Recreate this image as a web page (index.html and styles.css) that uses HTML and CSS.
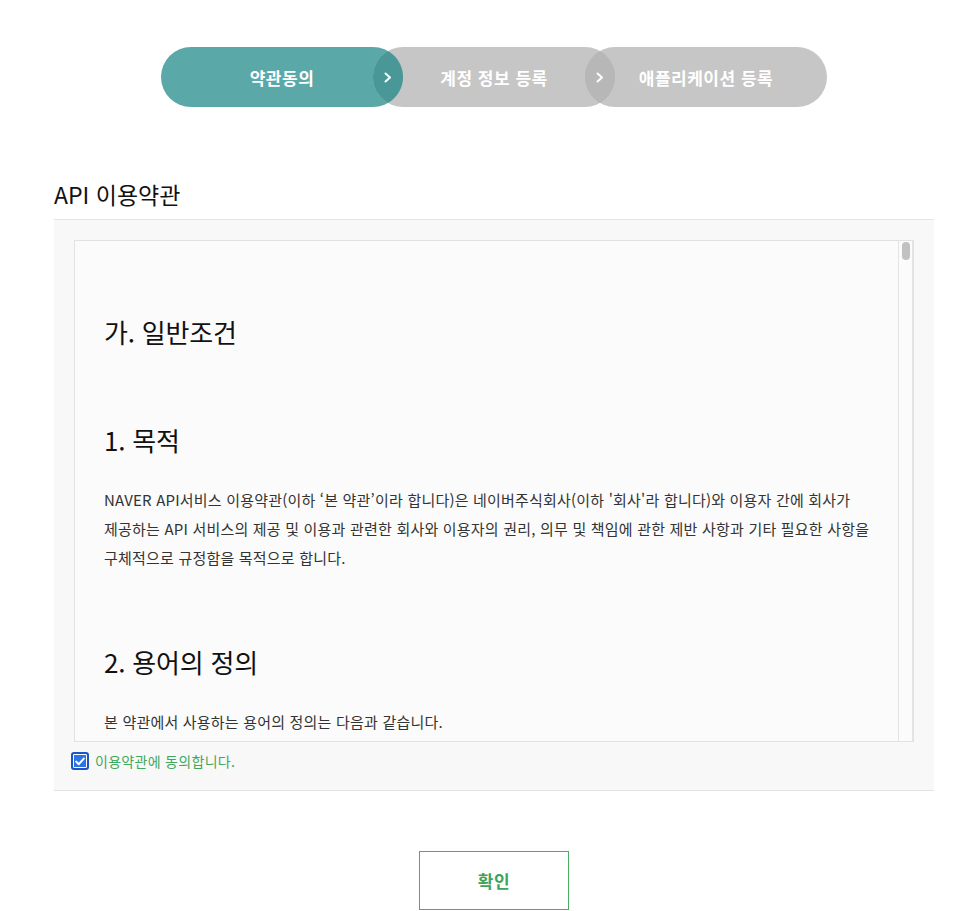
FILE: index.html
```html
<!DOCTYPE html>
<html lang="ko">
<head>
<meta charset="utf-8">
<title>API 이용약관</title>
<link rel="stylesheet" href="styles.css">
</head>
<body>
<div class="page">
  <ol class="steps">
    <li class="step step-active">약관동의</li>
    <li class="step">
      <span class="joint">
        <svg class="lens" width="30" height="60" viewBox="0 0 30 60"><path class="lens-teal" d="M15 4 A30 30 0 0 1 15 56 A30 30 0 0 1 15 4 Z"/></svg>
        <svg class="chev" width="8" height="11" viewBox="0 0 8 11"><polyline points="1.5,1.5 6,5.5 1.5,9.5"/></svg>
      </span>
      계정 정보 등록
    </li>
    <li class="step">
      <span class="joint">
        <svg class="lens" width="30" height="60" viewBox="0 0 30 60"><path class="lens-gray" d="M15 4 A30 30 0 0 1 15 56 A30 30 0 0 1 15 4 Z"/></svg>
        <svg class="chev" width="8" height="11" viewBox="0 0 8 11"><polyline points="1.5,1.5 6,5.5 1.5,9.5"/></svg>
      </span>
      애플리케이션 등록
    </li>
  </ol>

  <h2 class="title">API 이용약관</h2>

  <section class="terms">
    <div class="terms-box">
      <div class="terms-content">
        <h3 class="terms-h">가. 일반조건</h3>
        <h3 class="terms-h terms-h-next">1. 목적</h3>
        <p class="terms-p">NAVER API서비스 이용약관(이하 ‘본 약관’이라 합니다)은 네이버주식회사(이하 '회사'라 합니다)와 이용자 간에 회사가<br>제공하는 API 서비스의 제공 및 이용과 관련한 회사와 이용자의 권리, 의무 및 책임에 관한 제반 사항과 기타 필요한 사항을<br>구체적으로 규정함을 목적으로 합니다.</p>
        <h3 class="terms-h terms-h-next">2. 용어의 정의</h3>
        <p class="terms-p">본 약관에서 사용하는 용어의 정의는 다음과 같습니다.</p>
      </div>
      <div class="scrollbar"><div class="thumb"></div></div>
    </div>
    <label class="agree">
      <span class="check">
        <svg width="10" height="9" viewBox="0 0 10 9"><polyline points="1.2,4.6 3.8,7.2 8.8,1.6"/></svg>
      </span>
      이용약관에 동의합니다.
    </label>
  </section>

  <div class="actions">
    <button class="confirm" type="button">확인</button>
  </div>
</div>
</body>
</html>
```

FILE: styles.css
```css
html, body {
  margin: 0;
  padding: 0;
  background: #fff;
}

body {
  font-family: "Noto Sans CJK KR", "Noto Sans", sans-serif;
  color: #111;
}

.page {
  width: 880px;
  margin-left: 54px;
}

/* steps */
.steps {
  display: flex;
  justify-content: center;
  list-style: none;
  margin: 0;
  padding: 47px 0 0;
}

.step {
  position: relative;
  width: 242px;
  height: 60px;
  border-radius: 30px;
  background: #c6c6c6;
  color: #fff;
  font-size: 17px;
  font-weight: 700;
  letter-spacing: 0.5px;
  display: flex;
  align-items: center;
  justify-content: center;
}

.step + .step {
  margin-left: -30px;
}

.step-active {
  background: #5ba8a9;
}

.joint {
  position: absolute;
  left: 0;
  top: 0;
  width: 30px;
  height: 60px;
}

.lens {
  display: block;
}

.lens-teal {
  fill: #4a9798;
}

.lens-gray {
  fill: #b7b7b7;
}

.chev {
  position: absolute;
  left: 11px;
  top: 25px;
}

.chev polyline {
  fill: none;
  stroke: #fff;
  stroke-width: 2;
  stroke-linecap: round;
  stroke-linejoin: round;
}

/* title */
.title {
  margin: 71px 0 9px;
  font-size: 23px;
  line-height: 32px;
  font-weight: 400;
  letter-spacing: 0;
  color: #111;
}

/* terms */
.terms {
  background: #f8f8f8;
  border-top: 1px solid #e6e6e6;
  border-bottom: 1px solid #e2e2e2;
  padding: 20px 20px 19px;
}

.terms-box {
  display: flex;
  height: 500px;
  border: 1px solid #e2e2e2;
  background: #fbfbfb;
  overflow: hidden;
}

.terms-content {
  flex: 1;
  min-width: 0;
  overflow: hidden;
  padding: 73px 0 0 29px;
}

.terms-h {
  margin: 0 0 27px;
  font-size: 26px;
  line-height: 36px;
  font-weight: 400;
  color: #111;
  letter-spacing: -0.2px;
}

.terms-h-next {
  margin-top: 72px;
}

.terms-p {
  margin: 0;
  font-size: 15px;
  line-height: 29px;
  color: #333;
  letter-spacing: 0.2px;
  white-space: nowrap;
}

.scrollbar {
  width: 15px;
  box-sizing: border-box;
  border-left: 1px solid #e4e4e4;
  border-right: 1px solid #e4e4e4;
  padding: 1px 3px 0;
}

.thumb {
  width: 8px;
  height: 18px;
  border-radius: 4px;
  background: #c1c1c1;
}

.agree {
  display: flex;
  align-items: center;
  gap: 6px;
  margin: 9px 0 0 -3px;
  height: 20px;
  font-size: 14px;
  color: #3ea85c;
  letter-spacing: 0.3px;
}

.check {
  width: 18px;
  height: 18px;
  box-sizing: border-box;
  border: 2px solid #1b55c4;
  border-radius: 3px;
  background: #2a74e6;
  box-shadow: inset 0 0 0 1px #fff;
  display: flex;
  align-items: center;
  justify-content: center;
}

.check polyline {
  fill: none;
  stroke: #fff;
  stroke-width: 2;
  stroke-linecap: round;
  stroke-linejoin: round;
}

/* button */
.actions {
  display: flex;
  justify-content: center;
  padding-top: 60px;
}

.confirm {
  width: 150px;
  height: 59px;
  background: #fff;
  border: 1px solid #4aad66;
  color: #3da35a;
  font-family: "Noto Sans CJK KR", "Noto Sans", sans-serif;
  font-size: 17px;
  font-weight: 700;
  letter-spacing: 0.5px;
  cursor: pointer;
}
```
